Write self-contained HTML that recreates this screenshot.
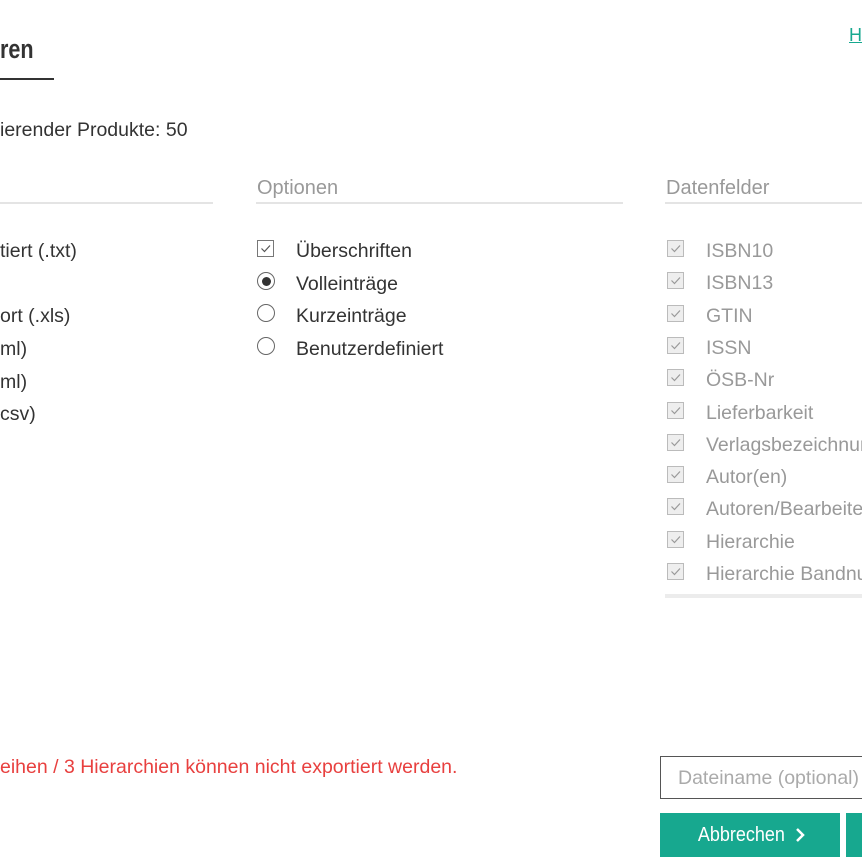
<!DOCTYPE html>
<html><head><meta charset="utf-8"><style>
html{overflow:hidden}
body{margin:0;width:862px;height:862px;overflow:hidden;background:#fff;font-family:"Liberation Sans",Arial,sans-serif;color:#333;position:relative}
#w{position:absolute;left:0;top:0;width:862px;height:862px;overflow:hidden}
.a{position:absolute;white-space:nowrap}
.t{font-size:19.5px;line-height:20px}
.g{color:#999}
.cb{position:absolute;width:17px;height:17px;border:1px solid #777;box-sizing:border-box}
.cb.d{border-color:#bbb;background:#eee}
.cb svg{position:absolute;left:2px;top:2px}
.rd{position:absolute;width:18px;height:18px;border:1px solid #666;border-radius:50%;box-sizing:border-box}
.hl{position:absolute;height:2px;background:#e4e4e4}
</style></head><body><div id="w">
<div class="a" style="left:0;top:34px;font-size:27px;font-weight:bold;color:#333;line-height:30px;transform:scaleX(0.8);transform-origin:0 0">ren</div>
<div class="a" style="left:0;top:78px;width:54px;height:2px;background:#333"></div>
<a class="a" style="left:849px;top:25px;font-size:18px;color:#17a88f;text-decoration:underline">H</a>
<div class="a t" style="left:0;top:120px">ierender Produkte: 50</div>

<div class="hl" style="left:0;top:202px;width:213px"></div>
<div class="a g" style="left:257px;top:178px;font-size:20px;line-height:20px">Optionen</div>
<div class="hl" style="left:256px;top:202px;width:367px"></div>
<div class="a g" style="left:666px;top:178px;font-size:20px;line-height:20px">Datenfelder</div>
<div class="hl" style="left:665px;top:202px;width:197px"></div>

<div class="a t" style="left:0;top:241px">tiert (.txt)</div>
<div class="a t" style="left:0;top:306px">ort (.xls)</div>
<div class="a t" style="left:0;top:339px">ml)</div>
<div class="a t" style="left:0;top:372px">ml)</div>
<div class="a t" style="left:0;top:404px">csv)</div>

<div class="cb" style="left:257px;top:240px"><svg width="11" height="11"><path d="M1.5 5.5l3 3L10 2.5" fill="none" stroke="#555" stroke-width="1.2"/></svg></div>
<div class="a t" style="left:296px;top:241px">Überschriften</div>
<div class="rd" style="left:257px;top:272px"><div style="position:absolute;left:3.5px;top:3.5px;width:9px;height:9px;border-radius:50%;background:#333"></div></div>
<div class="a t" style="left:296px;top:274px">Volleinträge</div>
<div class="rd" style="left:257px;top:304px"></div>
<div class="a t" style="left:296px;top:306px">Kurzeinträge</div>
<div class="rd" style="left:257px;top:337px"></div>
<div class="a t" style="left:296px;top:339px">Benutzerdefiniert</div>

<div id="df"></div>
<script>
var L=["ISBN10","ISBN13","GTIN","ISSN","ÖSB-Nr","Lieferbarkeit","Verlagsbezeichnung","Autor(en)","Autoren/Bearbeiter","Hierarchie","Hierarchie Bandnummer"];
var h="";for(var i=0;i<L.length;i++){var y=240+i*32.3;h+='<div class="cb d" style="left:667px;top:'+y+'px"><svg width="11" height="11"><path d="M1.5 5.5l3 3L10 2.5" fill="none" stroke="#999" stroke-width="1.2"/></svg></div><div class="a t g" style="left:706px;top:'+(y+1)+'px">'+L[i]+'</div>';}
document.getElementById("df").innerHTML=h;
</script>
<div class="a" style="left:665px;top:594px;width:197px;height:4px;background:#ececec"></div>

<div class="a t" style="left:0;top:757px;color:#e8403f">eihen / 3 Hierarchien können nicht exportiert werden.</div>
<div class="a" style="left:660px;top:756px;width:210px;height:43px;border:1px solid #555;box-sizing:border-box"></div>
<div class="a t" style="left:678px;top:768px;color:#aaa">Dateiname (optional)</div>
<div class="a" style="left:660px;top:813px;width:180px;height:44px;background:#17a88f;color:#fff;font-size:20px;line-height:44px;text-align:center"><span style="display:inline-block;transform:scaleX(0.9)">Abbrechen</span> <svg width="12" height="14" style="vertical-align:-1px"><path d="M2 1l6 6-6 6" fill="none" stroke="#fff" stroke-width="2.5"/></svg></div>
<div class="a" style="left:846px;top:813px;width:16px;height:44px;background:#17a88f"></div>
</div></body></html>
